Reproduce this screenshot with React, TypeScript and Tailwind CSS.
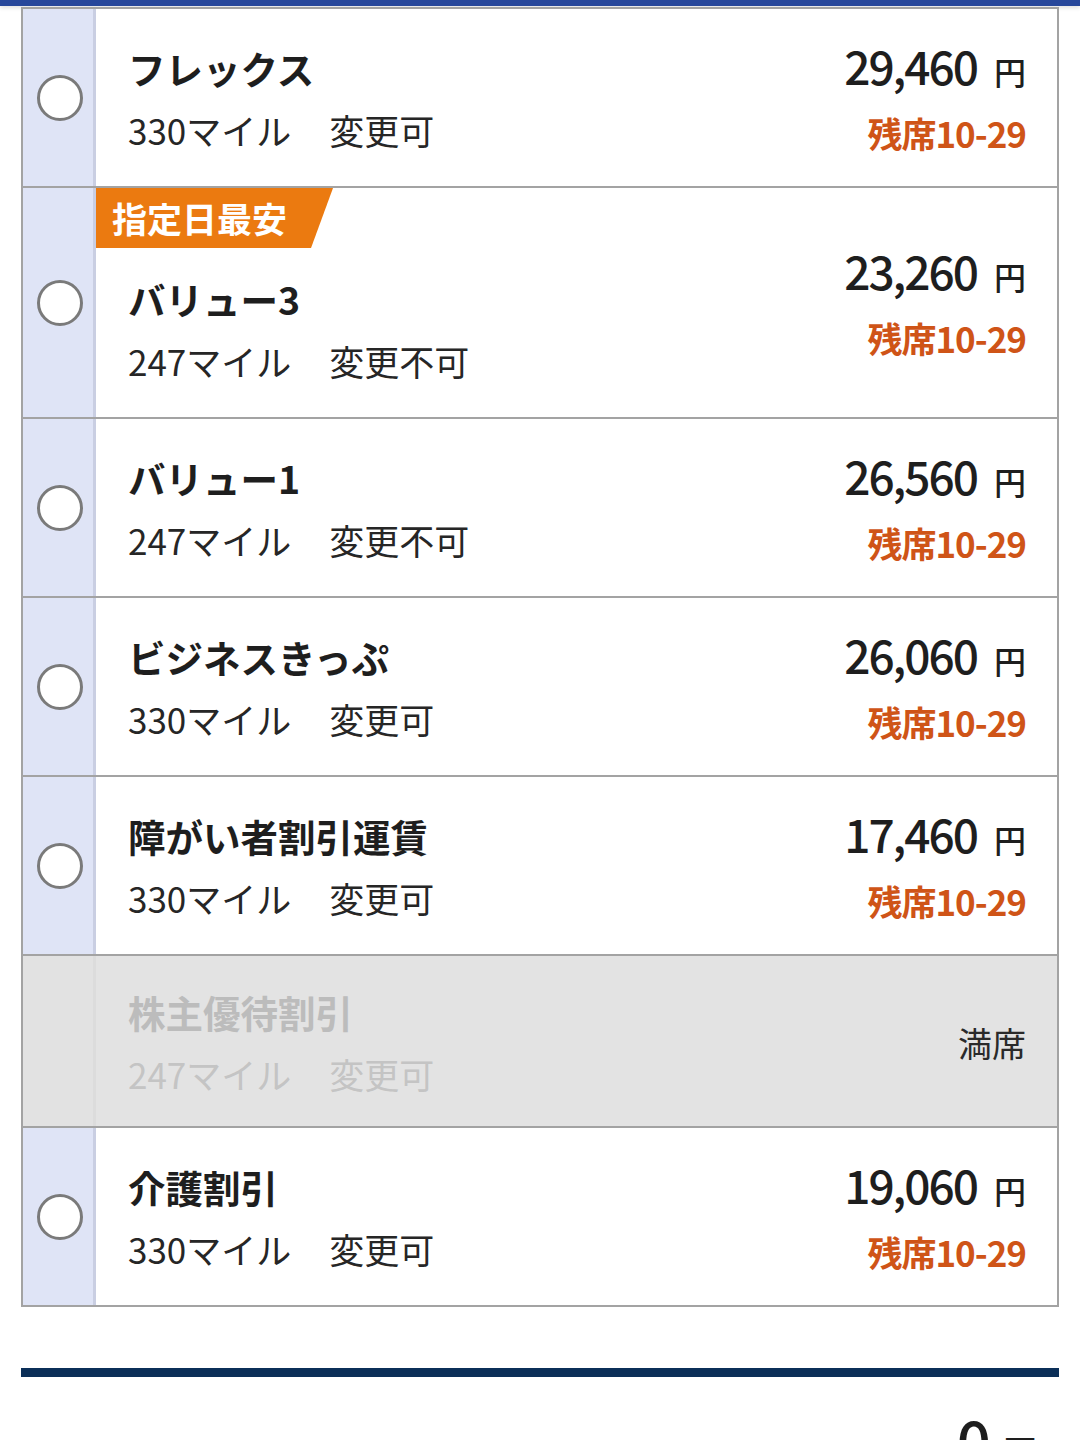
type Fare = {
  name: string;
  miles: string;
  change: string;
  price?: string;
  seats?: string;
  badge?: string;
  soldOut?: boolean;
};

const fares: Fare[] = [
  { name: "フレックス", miles: "330マイル", change: "変更可", price: "29,460", seats: "残席10-29" },
  { name: "バリュー3", miles: "247マイル", change: "変更不可", price: "23,260", seats: "残席10-29", badge: "指定日最安" },
  { name: "バリュー1", miles: "247マイル", change: "変更不可", price: "26,560", seats: "残席10-29" },
  { name: "ビジネスきっぷ", miles: "330マイル", change: "変更可", price: "26,060", seats: "残席10-29" },
  { name: "障がい者割引運賃", miles: "330マイル", change: "変更可", price: "17,460", seats: "残席10-29" },
  { name: "株主優待割引", miles: "247マイル", change: "変更可", soldOut: true },
  { name: "介護割引", miles: "330マイル", change: "変更可", price: "19,060", seats: "残席10-29" },
];

function FareRow({ fare, last }: { fare: Fare; last: boolean }) {
  const off = fare.soldOut;
  return (
    <div
      className={`flex ${last ? "" : "border-b-2 border-[#a3a3a3]"} ${
        off ? "bg-[#e3e3e3]" : "bg-white"
      }`}
    >
      {/* radio column */}
      <div
        className={`w-[73px] flex-shrink-0 flex items-center justify-center pl-[4px] border-r-[3px] ${
          off ? "bg-[#e2e2e2] border-[#dcdcdc]" : "bg-[#dfe4f6] border-[#c9cee2]"
        }`}
      >
        {!off && (
          <span className="w-[46px] h-[46px] rounded-full border-[3px] border-[#7a7a7a] bg-white" />
        )}
      </div>

      {/* main */}
      <div className="flex-1 flex flex-col">
        {fare.badge && (
          <div className="flex">
            <div className="h-[60px] pl-[16px] pr-[46px] bg-[#eb7a10] text-white font-bold text-[35px] leading-[60px] [clip-path:polygon(0_0,100%_0,calc(100%-22px)_100%,0_100%)]">
              {fare.badge}
            </div>
          </div>
        )}
        <div
          className={`flex-1 flex items-center pl-[32px] ${
            fare.badge ? "pt-[25px] pb-[30px]" : off ? "pt-[30px] pb-[26px]" : "pt-[33px] pb-[30px]"
          }`}
        >
          <div className="flex-1 flex flex-col gap-[10px]">
            <div
              className={`h-[52px] leading-[52px] text-[37.5px] font-bold ${
                off ? "text-[#bcbcbc]" : "text-[#1e1e1e]"
              }`}
            >
              {fare.name}
            </div>
            <div
              className={`h-[52px] leading-[52px] text-[35px] ${
                off ? "text-[#c4c4c4]" : "text-[#262626]"
              }`}
            >
              {fare.miles}
              <span className="ml-[38px]">{fare.change}</span>
            </div>
          </div>
        </div>
      </div>

      {/* price */}
      <div className="flex flex-col items-end justify-center pr-[31px] pt-[3px]">
        {off ? (
          <span className="text-[34px] text-[#2a2a2a]">満席</span>
        ) : (
          <div className="flex flex-col items-end gap-[16px]">
            <div className="h-[52px] flex items-baseline text-[#1e1e1e] leading-[52px]">
              <span className="text-[46px] font-medium tracking-[-2px]">{fare.price}</span>
              <span className="ml-[17px] text-[32px] font-medium">円</span>
            </div>
            <div className="h-[52px] leading-[52px] text-[35px] font-bold text-[#cf5417] tracking-[-1px]">
              {fare.seats}
            </div>
          </div>
        )}
      </div>
    </div>
  );
}

export default function App() {
  return (
    <div
      className="w-[1080px] h-[1440px] overflow-hidden bg-white"
      style={{ fontFamily: '"Noto Sans CJK JP", "Noto Sans", sans-serif' }}
    >
      {/* header strip */}
      <div className="h-[6px] bg-[#27479b] shadow-[0_2px_4px_rgba(0,0,0,0.12)]" />

      <div className="px-[21px] pt-[1px]">
        <div className="border-2 border-[#a3a3a3]">
          {fares.map((f, i) => (
            <FareRow key={f.name} fare={f} last={i === fares.length - 1} />
          ))}
        </div>

        {/* total section */}
        <div className="mt-[61px] h-[9px] bg-[#0b2f58]" />
        <div className="flex items-start justify-between pt-[32px]">
          <span className="ml-[68px] mt-[38px] text-[28px] text-[#555]">合計金額</span>
          <div className="flex items-baseline pr-[22px] text-[#1e1e1e]">
            <span className="text-[60px] font-medium leading-none">0</span>
            <span className="ml-[12px] text-[34px] font-medium">円</span>
          </div>
        </div>
      </div>
    </div>
  );
}
